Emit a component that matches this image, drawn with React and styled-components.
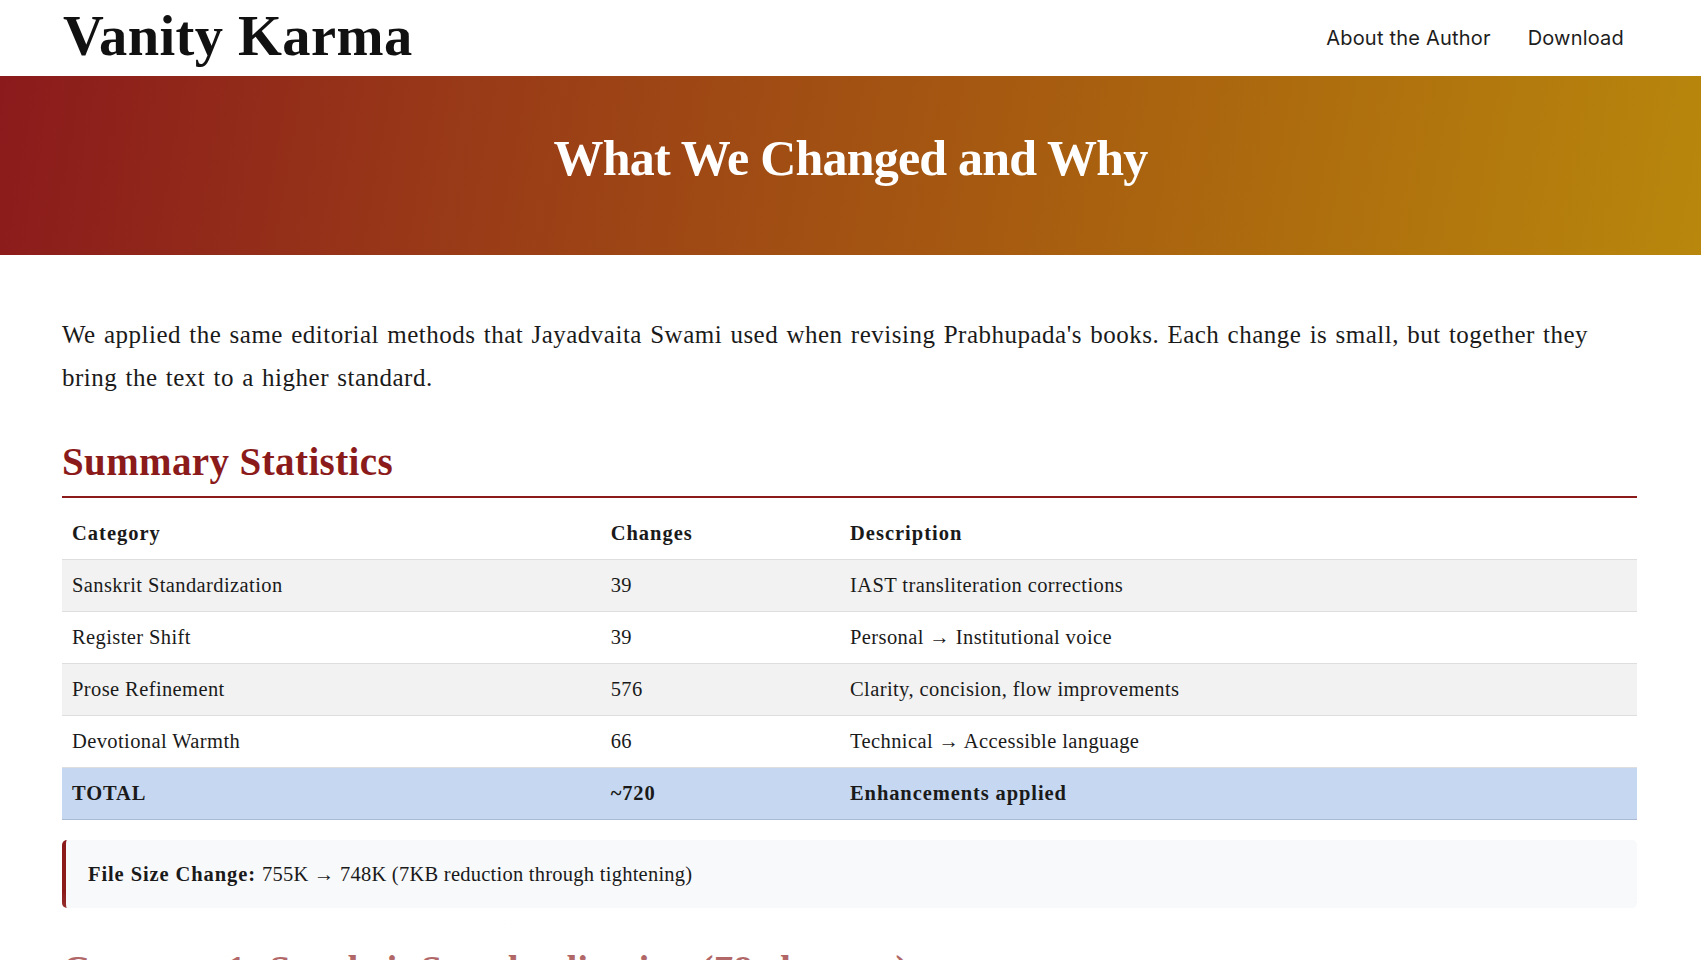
import styled, { createGlobalStyle } from "styled-components";

const GlobalStyle = createGlobalStyle`
  body {
    margin: 0;
    background: #ffffff;
    color: #1a1a1a;
    font-family: "Liberation Serif", "DejaVu Serif", serif;
  }
`;

const Header = styled.header`
  height: 76px;
  display: flex;
  align-items: center;
  justify-content: space-between;
  padding: 0 77px 0 63px;
  background: #ffffff;
`;

const Logo = styled.div`
  font-family: "Liberation Serif", serif;
  font-weight: 700;
  font-size: 56.5px;
  letter-spacing: 0.4px;
  color: #111;
  line-height: 1;
  margin-top: -4px;
`;

const Nav = styled.nav`
  display: flex;
  gap: 37px;
  a {
    font-family: "Inter", "Open Sans", sans-serif;
    font-size: 20px;
    color: #1d1d1d;
    text-decoration: none;
    letter-spacing: 0.2px;
  }
`;

const Banner = styled.section`
  height: 179px;
  display: flex;
  align-items: center;
  justify-content: center;
  background: linear-gradient(100deg, #8b1a1c 0%, #9a3d17 30%, #a9610f 65%, #b8870c 100%);
`;

const BannerTitle = styled.h1`
  margin: 0 0 15px;
  font-family: "Liberation Serif", serif;
  font-weight: 700;
  font-size: 50px;
  color: #ffffff;
  letter-spacing: -0.8px;
`;

const Main = styled.main`
  padding: 0 64px 0 62px;
`;

const Lead = styled.p`
  margin: 58px 0 0;
  font-size: 25px;
  letter-spacing: 0.5px;
  word-spacing: 1.5px;
  line-height: 43px;
`;

const SectionTitle = styled.h2`
  margin: ${(p) => p.$top || 40}px 0 0;
  padding-bottom: 11px;
  border-bottom: ${(p) => (p.$rule ? "2px solid #8b1a1a" : "none")};
  font-family: "Liberation Serif", serif;
  font-weight: 700;
  font-size: 39px;
  letter-spacing: ${(p) => (p.$rule ? "0.4px" : "0.1px")};
  line-height: 47px;
  color: #8b1a1a;
`;

const Table = styled.table`
  width: 100%;
  margin-top: 9px;
  border-collapse: collapse;
  font-size: 20.5px;
  letter-spacing: 0.4px;
`;

const Th = styled.th`
  text-align: left;
  height: 52px;
  padding: 0 10px;
  font-weight: 700;
  letter-spacing: 1px;
  border-bottom: 1px solid #dedede;
  width: ${(p) => p.$w};
`;

const Row = styled.tr`
  background: ${(p) => (p.$total ? "#c6d8f1" : p.$shade ? "#f2f2f2" : "#ffffff")};
  font-weight: ${(p) => (p.$total ? 700 : 400)};
  letter-spacing: ${(p) => (p.$total ? "0.9px" : "0.4px")};
  td {
    height: 51px;
    padding: 0 10px;
    border-bottom: 1px solid ${(p) => (p.$total ? "#a9bad2" : "#dedede")};
  }
`;

const Callout = styled.div`
  margin-top: 20px;
  height: 68px;
  display: flex;
  align-items: center;
  padding: 0 22px;
  background: #f8f9fa;
  border-left: 4px solid #8b1a1a;
  border-radius: 5px;
  font-size: 20.5px;
  letter-spacing: 0.25px;
  b {
    margin-right: 6px;
    letter-spacing: 0.9px;
  }
`;

const BottomFade = styled.div`
  position: fixed;
  left: 0;
  right: 0;
  bottom: 0;
  height: 70px;
  pointer-events: none;
  background: linear-gradient(to bottom, rgba(255, 255, 255, 0), rgba(255, 255, 255, 0.35));
`;

const rows = [
  ["Sanskrit Standardization", "39", "IAST transliteration corrections"],
  ["Register Shift", "39", "Personal → Institutional voice"],
  ["Prose Refinement", "576", "Clarity, concision, flow improvements"],
  ["Devotional Warmth", "66", "Technical → Accessible language"],
];

export default function App() {
  return (
    <>
      <GlobalStyle />
      <Header>
        <Logo>Vanity Karma</Logo>
        <Nav>
          <a href="#author">About the Author</a>
          <a href="#download">Download</a>
        </Nav>
      </Header>
      <Banner>
        <BannerTitle>What We Changed and Why</BannerTitle>
      </Banner>
      <Main>
        <Lead>
          We applied the same editorial methods that Jayadvaita Swami used when revising
          Prabhupada's books. Each change is small, but together they bring the text to a
          higher standard.
        </Lead>
        <SectionTitle $rule $top={39}>Summary Statistics</SectionTitle>
        <Table>
          <thead>
            <tr>
              <Th $w="34.2%">Category</Th>
              <Th $w="15.2%">Changes</Th>
              <Th>Description</Th>
            </tr>
          </thead>
          <tbody>
            {rows.map((r, i) => (
              <Row key={r[0]} $shade={i % 2 === 0}>
                <td>{r[0]}</td>
                <td>{r[1]}</td>
                <td>{r[2]}</td>
              </Row>
            ))}
            <Row $total>
              <td>TOTAL</td>
              <td>~720</td>
              <td>Enhancements applied</td>
            </Row>
          </tbody>
        </Table>
        <Callout>
          <b>File Size Change:</b> 755K → 748K (7KB reduction through tightening)
        </Callout>
        <SectionTitle $top={38}>Category 1: Sanskrit Standardization (78 changes)</SectionTitle>
      </Main>
      <BottomFade />
    </>
  );
}
